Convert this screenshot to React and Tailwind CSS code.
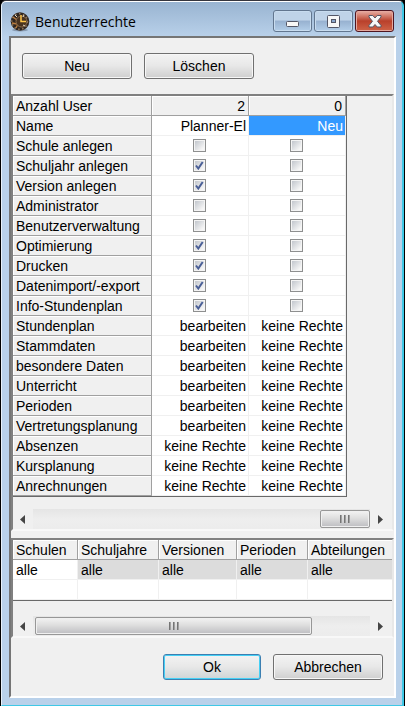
import React from "react";

const rights = [
  ["Schule anlegen", false, false],
  ["Schuljahr anlegen", true, false],
  ["Version anlegen", true, false],
  ["Administrator", false, false],
  ["Benutzerverwaltung", false, false],
  ["Optimierung", true, false],
  ["Drucken", true, false],
  ["Datenimport/-export", true, false],
  ["Info-Stundenplan", true, false],
  ["Stundenplan", "bearbeiten", "keine Rechte"],
  ["Stammdaten", "bearbeiten", "keine Rechte"],
  ["besondere Daten", "bearbeiten", "keine Rechte"],
  ["Unterricht", "bearbeiten", "keine Rechte"],
  ["Perioden", "bearbeiten", "keine Rechte"],
  ["Vertretungsplanung", "bearbeiten", "keine Rechte"],
  ["Absenzen", "keine Rechte", "keine Rechte"],
  ["Kursplanung", "keine Rechte", "keine Rechte"],
  ["Anrechnungen", "keine Rechte", "keine Rechte"],
];

const scopes = ["Schulen", "Schuljahre", "Versionen", "Perioden", "Abteilungen"];

function AppIcon() {
  return (
    <svg width="20" height="20" viewBox="0 0 20 20" aria-hidden="true">
      <ellipse cx="10" cy="18" rx="8" ry="1.5" fill="#5d6b80" opacity="0.5" />
      <circle cx="10" cy="9.5" r="9.3" fill="#30261f" />
      <circle cx="9.500" cy="9.500" r="7.8" fill="none" stroke="#8e765c" strokeWidth="1.800" strokeDasharray="1.500 2.500" />
      <path d="M3 5l4 3M2 11l5 1M6 16l2-4" stroke="#bd7e3e" strokeWidth="1.300" />
      <circle cx="11.500" cy="9.500" r="5.500" fill="#49331f" stroke="#8d6d4c" strokeWidth="1" />
      <path d="M11 3v6.500h5" fill="none" stroke="#ffc64a" strokeWidth="1.500" />
      <path d="M5 3l2 2M14 3l-1 2M15 14l-2-1" stroke="#e9dfcb" strokeWidth="1" />
    </svg>
  );
}

function CaptionButton({ label, close, children }) {
  return (
    <button
      aria-label={label}
      className={
        "flex h-[22px] w-[39px] items-center justify-center rounded-[3px] border " +
        (close
          ? "border-[#4f1520] bg-linear-to-b from-[#dfa096] from-0% via-[#d1786c] via-45% to-[#cf6a53] to-100% shadow-[inset_0_0_0_1px_#e5a99f]"
          : "border-[#62768f] bg-linear-to-b from-[#c3d6ea] to-[#adc9e5] shadow-[inset_0_0_0_1px_#c8dcef]")
      }
    >
      <span
        className={
          "flex h-[18px] w-[35px] items-center justify-center bg-linear-to-b " +
          (close
            ? "from-[#e3a499] from-0% via-[#b9402b] via-50% to-[#cc6045] to-100%"
            : "from-[#bfd3e8] from-45% via-[#97b1d0] via-50% to-[#b0cbe6] to-100%")
        }
      >
        {children}
      </span>
    </button>
  );
}

function PushButton({ children, primary }) {
  return (
    <button
      className={
        "rounded-[3px] border bg-linear-to-b from-[#f3f3f3] from-0% via-[#e8e8e8] via-48% " +
        (primary
          ? "h-[26px] w-[98px] border-[#3c7fb1] to-[#cfd5d6] shadow-[inset_0_0_0_1px_#46d0f5]"
          : "h-[26px] w-[110px] border-[#707070] to-[#cfcfcf] shadow-[inset_0_0_0_1px_#f7f7f7]")
      }
    >
      {children}
    </button>
  );
}

function CheckBox({ label, checked }) {
  return (
    <label className="mx-auto grid size-[13px] place-items-center">
      <input
        type="checkbox"
        aria-label={label}
        defaultChecked={checked}
        className="peer col-start-1 row-start-1 size-[13px] appearance-none border border-[#8e8f8f] bg-linear-to-br from-[#c6cad0] from-15% to-[#f6f6f6] to-80% shadow-[inset_0_0_0_1px_#f4f4f4]"
      />
      <svg
        viewBox="0 0 9 9"
        className="invisible col-start-1 row-start-1 size-[9px] peer-checked:visible"
        aria-hidden="true"
      >
        <path d="M1 4.500L3.300 7.500L7.700 1" fill="none" stroke="#4a5f97" strokeWidth="2" />
      </svg>
    </label>
  );
}

function ScrollArrow({ label, right }) {
  return (
    <button aria-label={label} className="flex w-5 shrink-0 items-center justify-center bg-[#f0f0f0]">
      <svg width="6" height="9" viewBox="0 0 6 9" aria-hidden="true">
        <path d={right ? "M1 0L6 4.500L1 9Z" : "M5 0L0 4.500L5 9Z"} fill="#454545" />
      </svg>
    </button>
  );
}

function ScrollBar({ thumb, atEnd }) {
  return (
    <div className="mr-[2px] flex h-5 bg-linear-to-b from-[#e5e5e5] via-[#eeeeee] to-[#ececec]">
      <ScrollArrow label="Nach links" />
      <div className={"flex min-w-0 flex-1 " + (atEnd ? "justify-end" : "pl-[2px]")}>
        <button
          aria-label="Bildlauf"
          className={
            "my-px flex items-center justify-center gap-[2px] rounded-[2px] border border-[#979797] bg-linear-to-b from-[#f3f3f3] from-0% via-[#dedede] via-45% to-[#bdbdc1] to-100% shadow-[inset_0_0_0_1px_#f0f0f0] " +
            thumb
          }
        >
          <span className="h-2 w-[2px] bg-linear-to-r from-[#606060] to-[#b8b8b8]" />
          <span className="h-2 w-[2px] bg-linear-to-r from-[#606060] to-[#b8b8b8]" />
          <span className="h-2 w-[2px] bg-linear-to-r from-[#606060] to-[#b8b8b8]" />
        </button>
      </div>
      <ScrollArrow label="Nach rechts" right />
    </div>
  );
}

const headCell =
  "h-5 border-r border-b border-[#a0a0a0] bg-[#f0f0f0] px-[3px] text-left font-normal shadow-[inset_1px_1px_0_#ffffff]";
const bodyCell = "h-5 border-r border-b border-[#f0f0f0] pr-[2px] text-right";

function RightsTable() {
  return (
    <table className="w-[334px] table-fixed border-separate border-spacing-0 border-r border-b border-[#696969] bg-white">
      <colgroup>
        <col className="w-[139px]" />
        <col className="w-[97px]" />
        <col className="w-[97px]" />
      </colgroup>
      <thead>
        <tr>
          <th scope="row" className={headCell}>Anzahl User</th>
          <th scope="col" className={headCell + " text-right"}>2</th>
          <th scope="col" className={headCell + " text-right"}>0</th>
        </tr>
      </thead>
      <tbody>
        <tr>
          <th scope="row" className={headCell}>Name</th>
          <td className={bodyCell}>Planner-El</td>
          <td className={bodyCell + " bg-[#3399ff] text-white"}>Neu</td>
        </tr>
        {rights.map(([name, ...values]) => (
          <tr key={name}>
            <th scope="row" className={headCell}>{name}</th>
            {values.map((value, i) => (
              <td key={i} className={bodyCell}>
                {typeof value === "boolean" ? (
                  <CheckBox label={name} checked={value} />
                ) : (
                  value
                )}
              </td>
            ))}
          </tr>
        ))}
      </tbody>
    </table>
  );
}

function ScopeTable() {
  return (
    <table className="w-full table-fixed border-separate border-spacing-0 border-b border-[#696969] bg-white">
      <colgroup>
        <col className="w-[65px]" />
        <col className="w-[81px]" />
        <col className="w-[78px]" />
        <col className="w-[71px]" />
        <col />
      </colgroup>
      <thead>
        <tr>
          {scopes.map((s) => (
            <th key={s} scope="col" className={headCell + " last:border-r-0"}>{s}</th>
          ))}
        </tr>
      </thead>
      <tbody>
        <tr>
          {scopes.map((s, i) => (
            <td
              key={s}
              className={"h-5 border-r border-b border-[#f0f0f0] px-[3px] last:border-r-0 " + (i ? "bg-[#dcdcdc]" : "")}
            >
              alle
            </td>
          ))}
        </tr>
        <tr>
          {scopes.map((s) => (
            <td key={s} className="h-5 border-r border-b border-[#f0f0f0] last:border-r-0" />
          ))}
        </tr>
      </tbody>
    </table>
  );
}

const sunken = "border-2 border-t-[#808080] border-l-[#808080] border-r-[#e8e8e8] border-b-[#f8f8f8]";

export default function App() {
  return (
    <div className="min-h-screen bg-black font-['Liberation_Sans',Arial,sans-serif] text-[14px] leading-[18px] text-black">
      <div className="flex min-h-screen flex-col rounded-t-[6px] border border-t-[#35353d] border-r-black border-b-black border-l-black">
        <main className="flex flex-1 flex-col rounded-t-[5px] border-t border-r-2 border-b border-l border-t-white border-r-[#3fc8e6] border-b-[#3fc8e6] border-l-[#e8f1fa] bg-[#b9d1ea] bg-linear-to-b from-[#99b4d1] from-0% to-[#b9d1ea] to-5% pr-[6px] pb-[7px] pl-[7px]">
          <header className="flex h-[34px] items-center justify-between pr-[2px] pl-[1px]">
            <div className="flex items-center gap-[5px] pt-[6px]">
              <AppIcon />
              <h1 className="font-['Open_Sans',sans-serif] text-[14px] leading-5">Benutzerrechte</h1>
            </div>
            <div className="flex gap-[2px] pt-2 pb-1">
              <CaptionButton label="Minimieren">
                <svg width="15" height="14" viewBox="0 0 15 14" aria-hidden="true">
                  <rect x="1.500" y="7.500" width="12" height="5" rx="1" fill="#f7f7f7" stroke="#535666" />
                </svg>
              </CaptionButton>
              <CaptionButton label="Maximieren">
                <svg width="13" height="13" viewBox="0 0 13 13" aria-hidden="true">
                  <rect x="0.500" y="0.500" width="12" height="12" rx="1" fill="#f7f7f7" stroke="#535666" />
                  <rect x="4.500" y="4.500" width="4" height="3" fill="#89a6cc" stroke="#535666" />
                </svg>
              </CaptionButton>
              <CaptionButton label="Schließen" close>
                <svg width="14" height="13" viewBox="0 0 14 13" aria-hidden="true">
                  <path d="M1 .5H4.800L7 3L9.200 .5H13V2L9.500 6.300L13 10.500V12H9.200L7 9.500L4.800 12H1V10.500L4.500 6.300L1 2Z" fill="#f7f7f7" stroke="#535666" strokeLinejoin="round" />
                </svg>
              </CaptionButton>
            </div>
          </header>
          <div className="flex flex-1 flex-col border-2 border-t-[#757575] border-r-white border-b-white border-l-[#757575] bg-[#f0f0f0]">
            <div className="flex gap-3 px-[11px] pt-[15px] pb-[15px]">
              <PushButton>Neu</PushButton>
              <PushButton>Löschen</PushButton>
            </div>
            <section className={sunken}>
              <RightsTable />
              <div className="pt-3">
                <ScrollBar thumb="w-[50px]" atEnd />
              </div>
            </section>
            <section className={"mt-[7px] " + sunken}>
              <ScopeTable />
              <div className="pt-[15px]">
                <ScrollBar thumb="w-[277px]" />
              </div>
            </section>
            <footer className="flex justify-end gap-3 px-[11px] pt-4 pb-4">
              <PushButton primary>Ok</PushButton>
              <PushButton>Abbrechen</PushButton>
            </footer>
          </div>
        </main>
      </div>
    </div>
  );
}
